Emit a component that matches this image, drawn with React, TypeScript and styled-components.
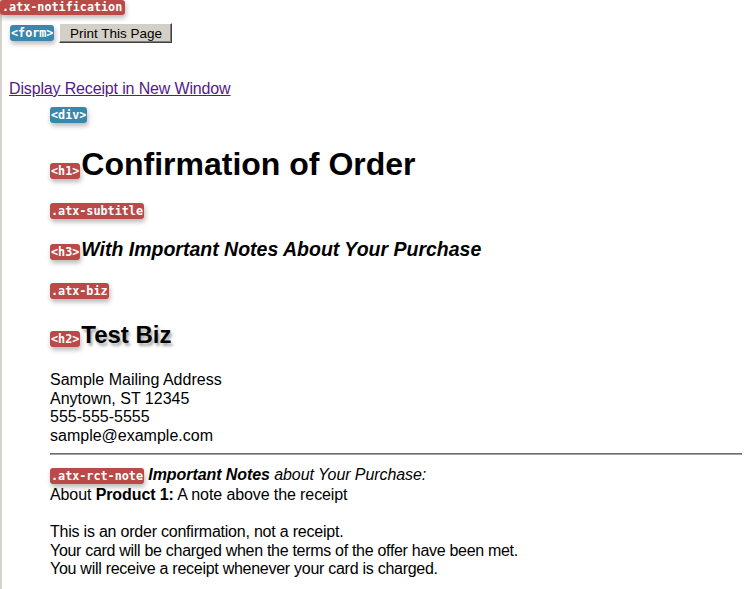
import React from "react";
import styled, { createGlobalStyle } from "styled-components";

const Global = createGlobalStyle`
  html, body { margin: 0; padding: 0; background: #ffffff; }
  body { font-family: "Liberation Sans", Arial, sans-serif; font-size: 16px; color: #000; }
`;

const Page = styled.div`
  position: relative;
  min-height: 589px;
  box-sizing: border-box;
  border-left: 2px solid #d6d3ce;
  padding: 23px 4px 0 7px;
`;

const Tag = styled.span<{ $tone: "red" | "blue" }>`
  display: inline-block;
  font-family: "DejaVu Sans Mono", "Liberation Mono", monospace;
  font-weight: bold;
  font-size: 11.75px;
  line-height: 16px;
  height: 16px;
  letter-spacing: 0;
  padding: 0 1px;
  color: #ffffff;
  background: ${(p) => (p.$tone === "red" ? "#b94a48" : "#3a87ad")};
  border-radius: 3px;
  box-shadow: 1px 3px 5px rgba(0, 0, 0, 0.28);
  font-style: normal;
  text-shadow: none;
  vertical-align: baseline;
`;

const BlockTag = styled(Tag)<{ $top: number }>`
  display: block;
  width: fit-content;
  margin-top: ${(p) => p.$top}px;
`;

const NotificationTag = styled(Tag)`
  position: absolute;
  top: 0;
  left: -2px;
  height: 15px;
  line-height: 15px;
  padding: 0 3px 0 2px;
  z-index: 2;
`;

const FormRow = styled.form`
  display: flex;
  align-items: center;
  gap: 5px;
  margin: 0;
  padding-left: 1px;
  height: 20px;
`;

const PrintButton = styled.button`
  font-family: "Liberation Sans", Arial, sans-serif;
  font-size: 13.5px;
  height: 20px;
  width: 113px;
  padding: 0;
  background: #d4d0c8;
  color: #000;
  border: 1px solid;
  border-color: #ffffff #404040 #404040 #ffffff;
  box-shadow: inset -1px -1px 0 #808080;
  border-radius: 0;
`;

const ReceiptLink = styled.a`
  display: block;
  width: fit-content;
  margin-top: 37px;
  line-height: 18px;
  font-size: 16px;
  letter-spacing: -0.15px;
  color: #551a8b;
  text-decoration: underline;
`;

const Content = styled.div`
  padding-left: 41px;
`;

const Title = styled.h1`
  margin: 23px 0 0;
  font-size: 32px;
  font-weight: bold;
  line-height: 37px;
  & > span { margin-right: 1px; }
`;

const Subtitle = styled.h3`
  margin: 19px 0 0;
  font-size: 19.5px;
  font-weight: bold;
  font-style: italic;
  line-height: 22px;
  & > span { margin-right: 1px; }
`;

const BizName = styled.h2`
  margin: 22px 0 0;
  font-size: 24px;
  font-weight: bold;
  line-height: 28px;
  text-shadow: 2px 3px 3px rgba(0, 0, 0, 0.35);
  & > span { margin-right: 1px; }
`;

const Address = styled.address`
  margin-top: 22px;
  font-style: normal;
  line-height: 18.5px;
`;

const Rule = styled.hr`
  margin: 8px 0 0;
  height: 0;
  border: 0;
  border-top: 1px solid #707070;
  border-bottom: 1px solid #a0a0a0;
`;

const Note = styled.div`
  margin-top: 10px;
  line-height: 18.5px;
`;

const NoteHead = styled.div`
  font-style: italic;
  line-height: 20.5px;
  letter-spacing: -0.08px;
`;

const Line = styled.div<{ $gap?: number; $tight?: number }>`
  margin-top: ${(p) => p.$gap ?? 0}px;
  letter-spacing: ${(p) => p.$tight ?? 0}px;
`;

export default function App() {
  return (
    <>
      <Global />
      <Page>
        <NotificationTag $tone="red">.atx-notification</NotificationTag>
        <FormRow onSubmit={(e) => e.preventDefault()}>
          <Tag $tone="blue">&lt;form&gt;</Tag>
          <PrintButton type="button">Print This Page</PrintButton>
        </FormRow>
        <ReceiptLink href="#">Display Receipt in New Window</ReceiptLink>
        <Content>
          <BlockTag $tone="blue" $top={9}>&lt;div&gt;</BlockTag>
          <Title>
            <Tag $tone="red">&lt;h1&gt;</Tag>Confirmation of Order
          </Title>
          <BlockTag $tone="red" $top={20}>.atx-subtitle</BlockTag>
          <Subtitle>
            <Tag $tone="red">&lt;h3&gt;</Tag>With Important Notes About Your Purchase
          </Subtitle>
          <BlockTag $tone="red" $top={23}>.atx-biz</BlockTag>
          <BizName>
            <Tag $tone="red">&lt;h2&gt;</Tag>Test Biz
          </BizName>
          <Address>
            <div>Sample Mailing Address</div>
            <div>Anytown, ST 12345</div>
            <div>555-555-5555</div>
            <div>sample@example.com</div>
          </Address>
          <Rule />
          <Note>
            <NoteHead>
              <Tag $tone="red">.atx-rct-note</Tag> <b>Important Notes</b> about Your Purchase:
            </NoteHead>
            <Line $tight={-0.1}>
              About <b>Product 1:</b> A note above the receipt
            </Line>
            <Line $gap={19} $tight={-0.22}>This is an order confirmation, not a receipt.</Line>
            <Line $tight={-0.3}>Your card will be charged when the terms of the offer have been met.</Line>
            <Line $tight={-0.27}>You will receive a receipt whenever your card is charged.</Line>
          </Note>
        </Content>
      </Page>
    </>
  );
}
